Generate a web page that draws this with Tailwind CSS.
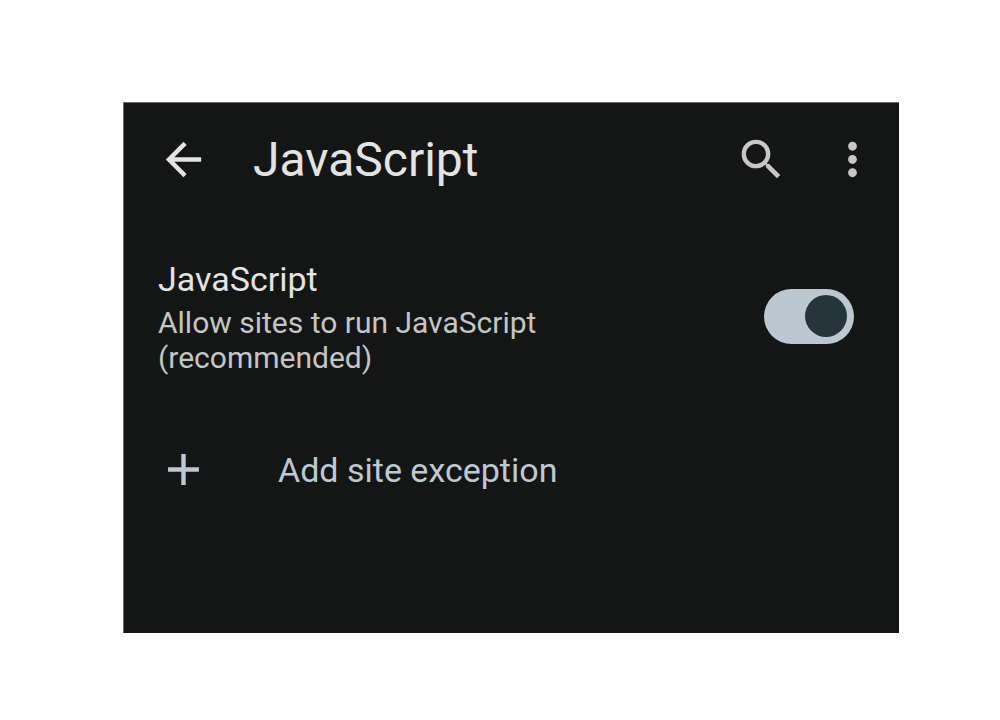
<!DOCTYPE html>
<html lang="en">
<head>
  <meta charset="UTF-8">
  <meta name="viewport" content="width=device-width, initial-scale=1.0">
  <title>JavaScript - Site settings</title>
  <script src="https://cdn.jsdelivr.net/npm/@tailwindcss/browser@4"></script>
</head>
<body class="bg-white font-['Roboto',sans-serif]">
  <div class="pl-[123px] pr-[101px] pt-[102px] pb-[87px]">
    <main class="bg-[#141615] border-t border-l border-[#6b6c6b] pb-[136px]">

      <header class="flex items-start pl-[33px] pr-5 pt-[30px]">
        <button type="button" aria-label="Back" class="shrink-0 text-[#e3e3e3]">
          <svg class="size-[53px]" viewBox="0 0 24 24" fill="currentColor">
            <path d="M20 11H7.83l5.59-5.59L12 4l-8 8 8 8 1.41-1.41L7.83 13H20v-2z"/>
          </svg>
        </button>
        <h1 class="flex-1 ml-[43px] text-[48px] leading-[54px] text-[#e3e3e3]">JavaScript</h1>
        <button type="button" aria-label="Search" class="shrink-0 text-[#c7c7c7]">
          <svg class="size-[53px]" viewBox="0 0 24 24" fill="currentColor">
            <path d="M15.5 14h-.79l-.28-.27A6.471 6.471 0 0 0 16 9.5 6.5 6.5 0 1 0 9.5 16c1.61 0 3.09-.59 4.23-1.57l.27.28v.79l5 4.99L20.49 19l-4.99-5zm-6 0C7.01 14 5 11.99 5 9.5S7.01 5 9.5 5 14 7.01 14 9.5 11.99 14 9.5 14z"/>
          </svg>
        </button>
        <button type="button" aria-label="More options" class="shrink-0 ml-[38px] text-[#c7c7c7]">
          <svg class="size-[53px]" viewBox="0 0 24 24" fill="currentColor">
            <path d="M12 8c1.1 0 2-.9 2-2s-.9-2-2-2-2 .9-2 2 .9 2 2 2zm0 2c-1.1 0-2 .9-2 2s.9 2 2 2 2-.9 2-2-.9-2-2-2zm0 6c-1.1 0-2 .9-2 2s.9 2 2 2 2-.9 2-2-.9-2-2-2z"/>
          </svg>
        </button>
      </header>

      <section class="flex items-center justify-between pl-[34px] pr-[45px] mt-[70px]">
        <label for="js-toggle" class="max-w-[440px]">
          <span class="block text-[34px] leading-[44px] text-[#e3e3e3]">JavaScript</span>
          <span class="block mt-1 text-[30px] leading-[35px] text-[#c4c5c4]">Allow sites to run JavaScript (recommended)</span>
        </label>
        <input id="js-toggle" type="checkbox" role="switch" checked
          class="appearance-none shrink-0 flex items-center w-[90px] h-[55px] px-[7px] rounded-full bg-[#5b6166] checked:bg-[#bcc8d1] checked:justify-end before:block before:size-[42px] before:rounded-full before:bg-[#26343c]">
      </section>

      <button type="button" class="flex items-start w-full pl-[33px] mt-[68px] text-left text-[#bcc8d2]">
        <svg class="size-[53px] shrink-0" viewBox="0 0 24 24" fill="currentColor">
          <path d="M19 13h-6v6h-2v-6H5v-2h6V5h2v6h6v2z"/>
        </svg>
        <span class="ml-[68px] text-[34px] leading-[54px]">Add site exception</span>
      </button>

    </main>
  </div>
</body>
</html>
